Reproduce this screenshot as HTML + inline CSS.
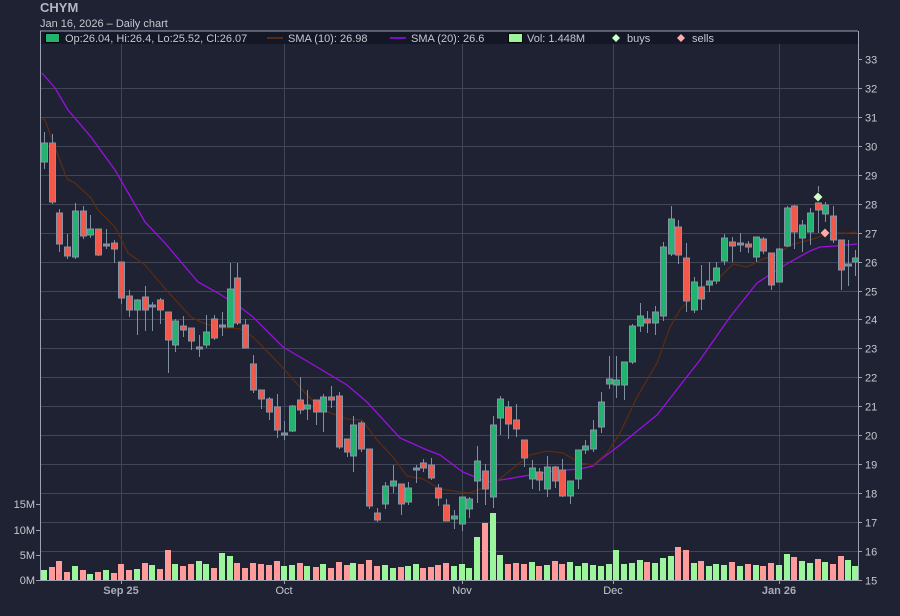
<!DOCTYPE html>
<html><head><meta charset="utf-8"><style>
html,body{margin:0;padding:0;background:#1e2232;}
body{width:900px;height:616px;overflow:hidden;font-family:"Liberation Sans",sans-serif;}
svg{display:block;}
svg text{font-family:"Liberation Sans",sans-serif;}
</style></head><body>
<svg id="s" width="900" height="616" xmlns="http://www.w3.org/2000/svg">
<rect width="900" height="616" fill="#1e2232"/>
<text x="40" y="12" font-size="13" font-weight="bold" fill="#b4b8c2">CHYM</text>
<text x="40" y="27" font-size="11" fill="#c4c8d0">Jan 16, 2026 – Daily chart</text>
<g id="grid"></g>
<g id="vol"></g>
<polyline id="sma20" fill="none" stroke="#9a10e0" stroke-width="1.3"/>
<polyline id="sma10" fill="none" stroke="#5a2c12" stroke-width="1.3"/>
<g id="candles"></g>
<path d="M818 192 L823 197 L818 202 L813 197 Z" fill="#ccffcc" stroke="#222" stroke-width="0.8"/>
<path d="M825 228 L830 233 L825 238 L820 233 Z" fill="#ffaaaa" stroke="#222" stroke-width="0.8"/>
<rect x="40" y="31" width="818" height="13" fill="#131726"/>
<line x1="40" y1="31" x2="858" y2="31" stroke="#9aa2b4"/>
<line x1="40.5" y1="31" x2="40.5" y2="580" stroke="#9aa2b4"/>
<line x1="858.5" y1="31" x2="858.5" y2="580" stroke="#9aa2b4"/>
<line x1="40" y1="580.5" x2="858" y2="580.5" stroke="#9aa2b4"/>
<rect x="45.5" y="33.5" width="14" height="9" fill="#22b46e" stroke="#000"/>
<text x="65" y="42" font-size="11" fill="#c4c8d0">Op:26.04, Hi:26.4, Lo:25.52, Cl:26.07</text>
<line x1="267" y1="38" x2="283" y2="38" stroke="#6a3410" stroke-width="1.5"/>
<text x="288" y="42" font-size="11" fill="#c4c8d0">SMA (10): 26.98</text>
<line x1="390" y1="38" x2="406" y2="38" stroke="#9a10e0" stroke-width="1.5"/>
<text x="411" y="42" font-size="11" fill="#c4c8d0">SMA (20): 26.6</text>
<rect x="508.5" y="33.5" width="14" height="9" fill="#9cf59a" stroke="#000"/>
<text x="527" y="42" font-size="11" fill="#c4c8d0">Vol: 1.448M</text>
<path d="M616 34 L620 38 L616 42 L612 38 Z" fill="#ccffcc"/>
<text x="627" y="42" font-size="11" fill="#c4c8d0">buys</text>
<path d="M681 34 L685 38 L681 42 L677 38 Z" fill="#ffaaaa"/>
<text x="692" y="42" font-size="11" fill="#c4c8d0">sells</text>
<g id="axes" font-size="11" fill="#c4c8d0"></g>
</svg>
<script>
var NS="http://www.w3.org/2000/svg";
function el(p,t,a,txt){var e=document.createElementNS(NS,t);for(var k in a)e.setAttribute(k,a[k]);if(txt!=null)e.textContent=txt;document.getElementById(p).appendChild(e);return e;}
function py(v){return 59+(33-v)*28.94;}
for(var v=15;v<=33;v++){var y=Math.round(py(v))+0.5;if(v>15&&v<33)el("grid","line",{x1:40,y1:y,x2:858,y2:y,stroke:"#414657"});
el("axes","line",{x1:858,y1:y,x2:862,y2:y,stroke:"#9aa2b4"});el("axes","text",{x:865,y:y+4},String(v));}
[121,284,462,613,779].forEach(function(x){el("grid","line",{x1:x+0.5,y1:44,x2:x+0.5,y2:580,stroke:"#414657"});el("axes","line",{x1:x+0.5,y1:580,x2:x+0.5,y2:584,stroke:"#9aa2b4"});});
[["0M",580],["5M",555],["10M",530],["15M",504]].forEach(function(a){el("axes","line",{x1:36,y1:a[1]+0.5,x2:40,y2:a[1]+0.5,stroke:"#9aa2b4"});el("axes","text",{x:35,y:a[1]+4,"text-anchor":"end"},a[0]);});
[["Sep 25",121,1],["Oct",284,0],["Nov",462,0],["Dec",613,0],["Jan 26",779,1]].forEach(function(a){var t=el("axes","text",{x:a[1],y:594,"text-anchor":"middle"},a[0]);if(a[2]){t.setAttribute("font-weight","bold");t.setAttribute("fill","#a8acb6");}});
var C=[[44,143,162,132,169,"g"],[52,143,202,134,204,"r"],[59,213,244,209,252,"r"],[67,247,256,234,259,"r"],[75,211,257,203,259,"g"],[83,211,236,206,239,"r"],[90,229,235,215,238,"g"],[98,229,255,229,256,"r"],[106,244,246,229,249,"d"],[114,243,249,240,263,"r"],[121,262,298,262,304,"r"],[129,296,310,290,317,"r"],[137,300,310,299,335,"g"],[145,297,310,286,331,"r"],[152,305,307,302,331,"d"],[160,300,310,298,324,"r"],[168,312,340,312,373,"r"],[175,321,345,319,352,"g"],[183,326,330,316,337,"r"],[191,328,341,328,350,"r"],[199,347,349,335,357,"d"],[206,332,345,315,348,"g"],[214,319,338,315,340,"r"],[222,325,327,312,336,"d"],[230,289,327,263,327,"g"],[237,278,323,263,325,"r"],[245,325,348,319,348,"r"],[253,364,390,355,393,"r"],[261,390,399,390,409,"r"],[269,399,412,397,420,"r"],[277,407,430,394,438,"r"],[284,433,435,421,440,"d"],[292,406,431,405,432,"g"],[300,400,410,377,414,"r"],[307,405,409,390,420,"g"],[316,400,412,400,425,"r"],[323,397,412,394,432,"g"],[331,397,400,386,408,"r"],[339,396,447,392,449,"r"],[347,439,452,439,457,"r"],[353,425,456,416,472,"g"],[361,423,449,421,452,"r"],[369,449,506,449,509,"r"],[377,513,520,508,522,"r"],[385,486,504,482,509,"g"],[393,481,486,465,493,"g"],[401,484,504,484,515,"r"],[408,488,502,482,505,"g"],[416,468,470,465,483,"d"],[423,463,468,459,472,"r"],[431,465,478,458,480,"r"],[438,488,498,484,506,"r"],[446,505,521,499,521,"r"],[454,516,519,510,529,"g"],[462,497,524,497,531,"g"],[469,499,509,497,518,"g"],[477,461,481,446,503,"g"],[485,471,489,464,505,"r"],[493,425,497,416,508,"g"],[500,399,418,396,435,"g"],[508,407,424,401,439,"r"],[516,420,429,404,437,"r"],[524,440,458,440,467,"r"],[532,468,479,460,489,"g"],[539,472,480,468,491,"r"],[547,467,489,456,497,"g"],[555,467,481,466,488,"r"],[562,470,496,459,497,"r"],[570,481,496,481,504,"g"],[578,450,479,450,489,"g"],[585,446,450,440,454,"g"],[593,430,449,420,452,"g"],[601,402,427,392,433,"g"],[609,379,384,356,389,"g"],[616,380,385,356,398,"g"],[624,362,385,362,400,"g"],[632,326,362,324,364,"g"],[640,316,326,303,332,"g"],[647,319,323,311,333,"r"],[655,312,323,306,335,"g"],[663,247,316,242,321,"g"],[671,219,254,206,256,"g"],[678,227,255,220,264,"r"],[686,258,301,243,312,"r"],[694,282,310,277,313,"g"],[701,287,299,265,310,"r"],[709,281,285,262,292,"g"],[716,268,281,262,284,"g"],[724,238,261,234,265,"g"],[732,242,246,237,262,"r"],[740,243,245,233,252,"d"],[748,244,247,241,253,"r"],[756,237,257,237,262,"g"],[763,239,251,237,254,"r"],[771,253,285,253,290,"r"],[779,249,282,248,282,"g"],[787,208,246,206,247,"g"],[794,206,232,205,249,"r"],[802,225,238,220,252,"g"],[810,213,232,208,245,"g"],[818,203,210,186,233,"r"],[825,205,214,202,222,"g"],[833,216,240,206,243,"r"],[841,240,270,240,290,"r"],[848,264,266,240,286,"d"],[855,258,262,250,276,"g"]];
var V=[10,13,19,8,14,10,6,8,10,7,16,10,11,17,15,11,30,16,14,16,19,16,12,27,24,17,12,17,16,15,19,14,15,17,14,13,16,12,18,15,17,16,20,14,15,12,13,14,16,12,13,15,17,14,16,12,43,57,67,25,16,17,16,18,14,15,19,16,18,14,17,15,14,16,30,16,17,20,18,17,22,24,33,30,17,19,14,16,15,18,14,16,15,14,17,15,26,23,19,17,21,18,16,24,20,14,11];
var cols={g:"#22b46e",r:"#f2594a",d:"#7d8898"};var vc={g:"#9cf59a",r:"#ff9b9b",d:"#9cf59a"};
C.forEach(function(c,i){var x=c[0];
var h=V[i]||14;el("vol","rect",{x:x-3,y:580-h,width:6,height:h,fill:vc[c[5]]});
el("candles","line",{x1:x+0.5,y1:c[3],x2:x+0.5,y2:c[4],stroke:"#8090a2","stroke-width":1});
var bh=Math.max(c[2]-c[1],2);
el("candles","rect",{x:x-2.5,y:c[1],width:6,height:bh,fill:cols[c[5]],stroke:"#8593a6","stroke-width":1});});
document.getElementById("sma20").setAttribute("points","42,73 55,88 68,110 91,137 115,170 145,222 165,243 198,282 218,293 240,307 253,317 283,347 317,367 347,385 367,402 400,438 427,450 440,455 460,470 463,472 487,482 507,479 553,471 580,469 593,466 600,460 620,445 657,415 700,360 730,317 757,283 777,270 790,262 810,251 820,247 835,246 857,244");
document.getElementById("sma10").setAttribute("points","42,118 45,120 56,150 67,179 75,183 91,198 98,210 115,227 128,253 145,265 168,292 191,317 201,322 218,328 231,328 240,329 253,337 263,347 283,368 307,395 323,410 347,419 362,420 377,440 393,457 407,476 423,479 440,489 460,492 470,493 477,490 490,487 507,473 530,455 547,451 563,453 580,463 593,465 607,453 620,433 637,397 657,363 670,327 680,310 700,288 720,277 733,264 747,267 763,259 777,255 790,245 813,239 830,233 847,233 857,232");
</script>
</body></html>
